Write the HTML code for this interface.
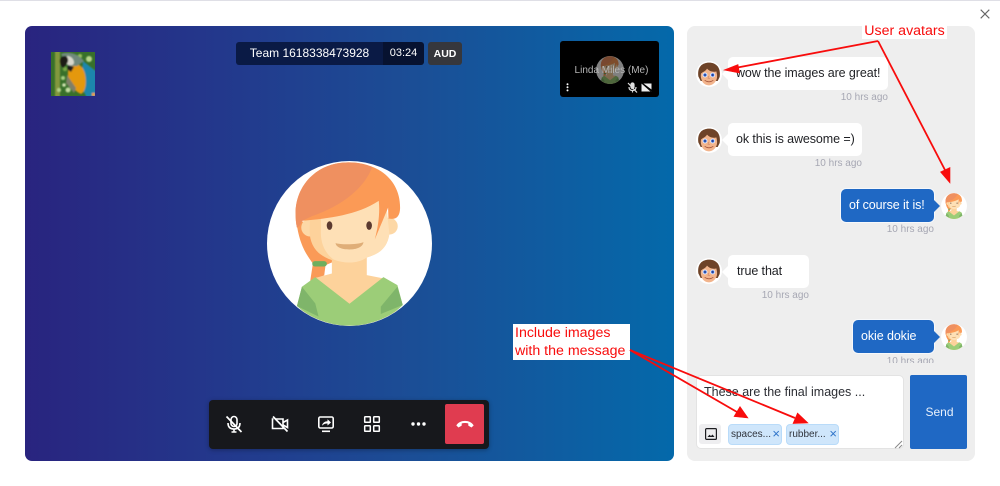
<!DOCTYPE html>
<html><head><meta charset="utf-8">
<style>
html,body{margin:0;padding:0;background:#fff}
body{width:1000px;height:486px;position:relative;overflow:hidden;font-family:"Liberation Sans",sans-serif;color:#1f2024}
.a{position:absolute;white-space:nowrap}
.msg{position:absolute;height:33px;line-height:33px;font-size:12.5px;letter-spacing:-.09px;border-radius:5px;background:#fff;padding-left:8px;box-sizing:border-box;white-space:nowrap}
.msg.me{background:#1f68c4;color:#fff;box-shadow:0 0 0 1px #f6f8fb}
.msg.them::before{content:"";position:absolute;left:-6px;top:11px;border:6px solid transparent;border-left:0;border-right-color:#fff}
.msg.me::after{content:"";position:absolute;right:-6px;top:11px;border:6px solid transparent;border-right:0;border-left-color:#1f68c4}
.t{position:absolute;font-size:10px;color:#a6a7b3;text-align:right;line-height:12px;white-space:nowrap}
.chip{position:absolute;top:424px;height:21px;background:#cfe6fb;border:1px solid #b9dbf9;border-radius:4px;box-sizing:border-box;font-size:10px;line-height:20px;color:#30343c;padding-left:2px;white-space:nowrap}
.chip b{position:absolute;right:1px;top:0;font-weight:400;color:#2f74c9;font-size:13px;line-height:18px}
svg{position:absolute;overflow:visible}
.note{position:absolute;background:#fff;color:#f80c0c;font-size:14.2px;line-height:17px;white-space:nowrap}
</style></head><body>
<div class="a" style="left:0;top:0;width:1000px;height:1px;background:#dfdfe6"></div>

<svg width="0" height="0" style="left:0;top:0">
<defs>
<clipPath id="cg"><circle cx="298" cy="280" r="247"/></clipPath>
<symbol id="girl" viewBox="50 32 496 496">
<circle cx="298" cy="280" r="248" fill="#fff"/>
<g clip-path="url(#cg)">
<path d="M138 210C145 275 165 310 188 340L180 392L222 376L226 345L250 335L240 230Z" fill="#fa9a57"/>
<path d="M245 300H350V375L400 385L300 470L190 385L245 370Z" fill="#fdd29b"/>
<path d="M140 480H460V540H140Z" fill="#fdd29b"/>
<path d="M195 381L298 461L400 381L442 405L458 465C420 505 350 530 298 530C240 530 180 505 140 468L155 410Z" fill="#9ccd78"/>
<path d="M155 410L195 460L205 500L140 468Z" fill="#7fb56a"/>
<path d="M442 410L392 470L392 492L458 465Z" fill="#7fb56a"/>
<circle cx="180" cy="232" r="27" fill="#fdd8a6"/>
<circle cx="418" cy="228" r="25" fill="#fdd8a6"/>
<path d="M180 190L405 130L418 250C412 295 385 312 350 322C320 342 280 345 245 330C200 315 178 285 178 240Z" fill="#fdd29b"/>
<path d="M212 185L405 130L418 250C412 295 385 312 350 322C325 340 285 342 250 328C225 310 210 280 212 240Z" fill="#fee0b6"/>
<ellipse cx="238" cy="226" rx="8.500" ry="13" fill="#5b3a30"/>
<ellipse cx="357" cy="226" rx="8.500" ry="13" fill="#5b3a30"/>
<path d="M256 279C272 284 322 284 340 276C338 292 318 298 298 298C276 298 258 292 256 279Z" fill="#dfae78"/>
<path d="M136 190C136 105 200 36 295 36C385 36 452 90 450 175C449 197 440 210 415 205L414 172L374 268C384 230 390 190 386 152C320 195 235 205 155 212C150 230 143 232 140 232C137 220 136 205 136 190Z" fill="#fb9a56"/>
<path d="M136 190C136 105 200 36 295 36C320 36 345 41 366 50C345 110 280 165 185 198L155 212C150 226 143 232 140 232C137 220 136 205 136 190Z" fill="#ef9060"/>
<rect x="186" y="333" width="44" height="16" rx="8" fill="#6fae5e"/>
</g>
</symbol>
<symbol id="boy" viewBox="0 0 78 78">
<circle cx="39" cy="39" r="39" fill="#fff"/>
<path d="M7 46C3 18 19 5 39 5C61 5 75 20 71 48L65 60H14Z" fill="#6e4328"/>
<path d="M15 38C20 32 27 33 33 23C41 32 52 34 61 31C64 42 64 50 61 57C56 68 47 73 39 73C30 73 20 68 17 57C14 50 14 44 15 38Z" fill="#f2b48c"/>
<circle cx="27" cy="42" r="7.500" fill="#e8eef8"/><circle cx="50" cy="42" r="7.500" fill="#e8eef8"/>
<circle cx="27" cy="42" r="4.800" fill="#3a68d8"/><circle cx="50" cy="42" r="4.800" fill="#3a68d8"/>
<circle cx="27" cy="42" r="2" fill="#10204a"/><circle cx="50" cy="42" r="2" fill="#10204a"/>
<path d="M26 58Q39 67 52 58" fill="none" stroke="#a5563d" stroke-width="2.500"/>
<path d="M38 45L36 52H42" fill="none" stroke="#cf8a68" stroke-width="2"/>
</symbol>
<filter id="bl" x="-10%" y="-10%" width="120%" height="120%"><feGaussianBlur stdDeviation="0.7"/></filter>
</defs>
</svg>

<!-- video panel -->
<div class="a" style="left:25px;top:26px;width:649px;height:435px;border-radius:7px;background:linear-gradient(90deg,#29247f 0%,#23388c 30%,#1b4e96 60%,#0469aa 100%)"></div>

<!-- parrot -->
<svg style="left:51px;top:52px;overflow:hidden" width="44" height="44" viewBox="0 0 44 44">
<rect width="44" height="44" fill="#38702a"/>
<g filter="url(#bl)">
<rect x="4" y="-2" width="5" height="48" fill="#83983c"/>
<circle cx="12" cy="26" r="2" fill="#a9cf80"/><circle cx="17" cy="38" r="2.500" fill="#c2dca0"/><circle cx="8" cy="38" r="2" fill="#b5d488"/><circle cx="13" cy="33" r="1.800" fill="#cfe2b0"/>
<circle cx="38" cy="7" r="3" fill="#b8d68a"/><circle cx="29" cy="4" r="2" fill="#98c25c"/><circle cx="14" cy="17" r="2.200" fill="#78a844"/>
<path d="M32 9L30 34L36 46H46V20Z" fill="#1c86ac"/>
<path d="M18 13C25 9 32 13 34 22C36 32 34 40 30 42C23 39 16 30 17 20Z" fill="#e4980f"/>
<path d="M10 2C18 -1 28 2 33 9L26 14L17 14Z" fill="#6f8a7c"/>
<path d="M16 4C20 4 23 7 23 11C22 14 18 14 16 12Z" fill="#d8d8cc"/>
<path d="M9 7C11 3 16 3 17 7C18 11 14 13 13 16C10 15 8 11 9 7Z" fill="#1a1a18"/>
<path d="M17 13L23 15L20 20L16 17Z" fill="#1c1c1a"/>
<path d="M16 23L25 36L23 41L15 31Z" fill="#7f7f68"/>
<rect x="41" y="41" width="3" height="3" fill="#f0a32a"/>
</g>
</svg>

<!-- title -->
<div class="a" style="left:236px;top:42px;width:147px;height:23px;background:#0a1a45;border-radius:3px 0 0 3px;color:#fff;font-size:12px;line-height:23px;text-align:center">Team 1618338473928</div>
<div class="a" style="left:383px;top:42px;width:41px;height:23px;background:#071230;border-radius:0 3px 3px 0;color:#fff;font-size:11px;line-height:22px;text-align:center">03:24</div>
<div class="a" style="left:428px;top:42px;width:34px;height:23px;background:#36373c;border-radius:3px;color:#fff;font-size:10.500px;font-weight:700;line-height:24px;text-align:center">AUD</div>

<!-- self view -->
<div class="a" style="left:560px;top:41px;width:99px;height:56px;background:#000;border-radius:3px"></div>
<svg style="left:596px;top:56px;opacity:.5" width="28" height="28"><use href="#girl" width="28" height="28"/></svg>
<div class="a" style="left:562px;top:64px;width:99px;text-align:center;color:#b5b5b5;font-size:10px;line-height:14px">Linda Miles (Me)</div>
<svg style="left:566px;top:83px" width="3" height="9"><circle cx="1.500" cy="1.200" r="1" fill="#fff"/><circle cx="1.500" cy="4.300" r="1" fill="#fff"/><circle cx="1.500" cy="7.400" r="1" fill="#fff"/></svg>
<svg style="left:627px;top:82px" width="11" height="11" viewBox="0 0 22 22" fill="none" stroke="#ddd" stroke-width="2.400"><rect x="8" y="2" width="6" height="11" rx="3" fill="#ddd"/><path d="M4 10c0 5 3 7 7 7s7-2 7-7M11 17v4M2 2l18 19"/></svg>
<svg style="left:641px;top:83px" width="11" height="9" viewBox="0 0 22 18"><path d="M1 1L21 17H1Z" fill="#eee"/><path d="M5 1H21V13Z" fill="#eee"/><path d="M1 0L21 18" stroke="#000" stroke-width="1.500"/></svg>

<!-- main avatar -->
<svg style="left:267px;top:161px" width="165" height="165"><use href="#girl" width="165" height="165"/></svg>

<!-- toolbar -->
<div class="a" style="left:209px;top:400px;width:280px;height:49px;background:#17181c;border-radius:4px;box-shadow:0 1px 5px rgba(0,0,0,.3)"></div>
<svg style="left:225px;top:415px" width="18" height="18" viewBox="0 0 18 18" fill="none" stroke="#fff" stroke-width="1.600"><rect x="6" y="1.500" width="6" height="10" rx="3"/><path d="M3 8c0 4.500 2.600 6 6 6s6-1.500 6-6M9 14v3M6.500 17h5"/><path d="M1.500 1.500L16.500 17" stroke-width="1.700"/></svg>
<svg style="left:271px;top:416px" width="18" height="16" viewBox="0 0 18 16" fill="none" stroke="#fff" stroke-width="1.600"><path d="M4 3H12V12.500H1.500V3H2.500M12 6.500L16.500 4V11.500L12 9"/><path d="M2 .5L16.500 15.500" stroke-width="1.700"/></svg>
<svg style="left:318px;top:416px" width="16" height="16" viewBox="0 0 16 16" fill="none" stroke="#fff" stroke-width="1.600"><rect x=".8" y="1" width="14.400" height="11" rx="1.500"/><path d="M4 15.300H12"/><path d="M4 9.700C4.500 6.800 7 5.300 9.500 5.300V3.300L13 6.500L9.500 9.500V7.500C7.500 7.400 5.500 8 4 9.700Z" fill="#fff" stroke="none"/></svg>
<svg style="left:364px;top:416px" width="16" height="16" viewBox="0 0 16 16" fill="none" stroke="#fff" stroke-width="1.500"><rect x=".7" y=".7" width="5.600" height="5.600" rx=".6"/><rect x="9.700" y=".7" width="5.600" height="5.600" rx=".6"/><rect x=".7" y="9.700" width="5.600" height="5.600" rx=".6"/><rect x="9.700" y="9.700" width="5.600" height="5.600" rx=".6"/></svg>
<svg style="left:411px;top:422px" width="15" height="4"><circle cx="2" cy="2" r="1.700" fill="#fff"/><circle cx="7.500" cy="2" r="1.700" fill="#fff"/><circle cx="13" cy="2" r="1.700" fill="#fff"/></svg>
<div class="a" style="left:445px;top:404px;width:39px;height:40px;background:#e03c50;border-radius:2px"></div>
<svg style="left:456px;top:420px" width="18" height="8" viewBox="0 0 18 8"><path d="M.3 5.400C4 -.6 14 -.6 17.700 5.400L15.500 7.500L12.300 5.600V3.500C10.500 2.800 7.500 2.800 5.700 3.500V5.600L2.500 7.500Z" fill="#fff"/></svg>

<!-- chat panel -->
<div class="a" style="left:687px;top:26px;width:288px;height:435px;background:#eee;border-radius:8px"></div>

<svg style="left:696px;top:61px" width="26" height="26"><use href="#boy" width="26" height="26"/></svg>
<div class="msg them" style="left:728px;top:57px;width:160px">wow the images are great!</div>
<div class="t" style="right:112px;top:92px">10 hrs ago</div>

<svg style="left:696px;top:127px" width="26" height="26"><use href="#boy" width="26" height="26"/></svg>
<div class="msg them" style="left:728px;top:123px;width:134px">ok this is awesome =)</div>
<div class="t" style="right:138px;top:158px">10 hrs ago</div>

<svg style="left:941px;top:193px" width="26" height="26"><use href="#girl" width="26" height="26"/></svg>
<div class="msg me" style="left:841px;top:189px;width:93px">of course it is!</div>
<div class="t" style="right:66px;top:224px">10 hrs ago</div>

<svg style="left:696px;top:258px" width="26" height="26"><use href="#boy" width="26" height="26"/></svg>
<div class="msg them" style="left:728px;top:255px;width:81px"><span style="margin-left:1px">true that</span></div>
<div class="t" style="right:191px;top:290px">10 hrs ago</div>

<svg style="left:941px;top:324px" width="26" height="26"><use href="#girl" width="26" height="26"/></svg>
<div class="msg me" style="left:853px;top:320px;width:81px">okie dokie</div>
<div class="a" style="left:840px;top:353px;width:94px;height:10px;overflow:hidden"><div class="t" style="right:0;top:3px">10 hrs ago</div></div>

<!-- input -->
<div class="a" style="left:696px;top:375px;width:208px;height:74px;background:#fff;border:1px solid #e3e3e3;border-radius:5px;box-sizing:border-box"></div>
<div class="a" style="left:704px;top:385px;font-size:12.500px;line-height:15px;color:#2b2d33">These are the final images ...</div>
<div class="a" style="left:699px;top:424px;width:22px;height:20px;background:#eeeef0;border-radius:3px"></div>
<svg style="left:705px;top:428px" width="12" height="12" viewBox="0 0 12 12"><rect x=".6" y=".6" width="10.800" height="10.800" rx="1" fill="none" stroke="#1c1d21" stroke-width="1.200"/><path d="M2.500 9L4.500 6.800L6 8L7.500 6.500L9.500 9Z" fill="#1c1d21"/></svg>
<div class="chip" style="left:728px;width:54px">spaces...<b>×</b></div>
<div class="chip" style="left:786px;width:53px">rubber...<b>×</b></div>
<svg style="left:895px;top:441px" width="7" height="7"><path d="M0 7L7 0M4 7L7 4" stroke="#8a8a8a" stroke-width="1"/></svg>
<div class="a" style="left:910px;top:375px;width:57px;height:74px;background:#1f68c4;border-radius:2px;color:#e8f0fb;font-size:12px;line-height:75px;text-align:center;padding-left:2px;box-sizing:border-box">Send</div>

<!-- close -->
<svg style="left:980px;top:9px" width="10" height="10"><path d="M.7 .7L9.300 9.300M9.300 .7L.7 9.300" stroke="#666" stroke-width="1.100"/></svg>

<!-- annotations -->
<div class="note" style="left:862px;top:24px;width:85px;height:15px;line-height:15px;text-align:center">User avatars</div>
<div class="note" style="left:513px;top:324px;width:117px;height:36px;padding-left:2px;box-sizing:border-box;line-height:18px">Include images<br>with the message</div>
<svg style="left:0;top:0" width="1000" height="486" fill="none" stroke="#f80c0c" stroke-width="1.800">
<path d="M878 41L735 68"/><path d="M724 70L738 64.500L739.500 73Z" fill="#f80c0c" stroke-width=".6"/>
<path d="M878 41L945 170"/><path d="M950 183L940.500 172L950 167.500Z" fill="#f80c0c" stroke-width=".6"/>
<path d="M630 350L737 412"/><path d="M748 418L734 416.500L740 406.500Z" fill="#f80c0c" stroke-width=".6"/>
<path d="M630 350L795 418"/><path d="M808 423L793 423.500L797.500 413Z" fill="#f80c0c" stroke-width=".6"/>
</svg>
</body></html>
